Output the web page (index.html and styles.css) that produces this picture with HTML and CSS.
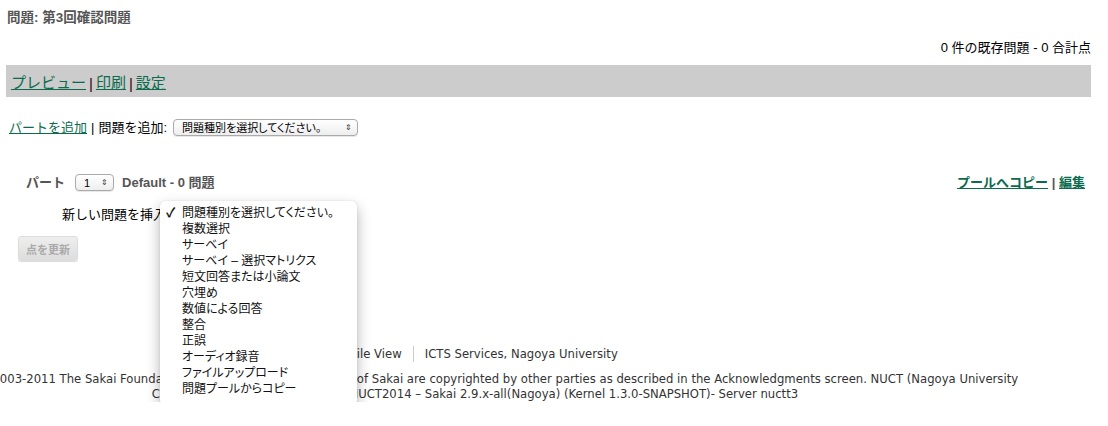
FILE: index.html
```html
<!DOCTYPE html>
<html lang="ja">
<head>
    <meta charset="UTF-8">
    <title>問題: 第3回確認問題</title>
    <link rel="stylesheet" href="styles.css">
</head>
<body>
    <div class="page">
        <h1 class="title">問題: 第3回確認問題</h1>
        <div class="totals">0 件の既存問題 - 0 合計点</div>

        <div class="navbar">
            <a href="#">プレビュー</a><span class="sep">|</span><a href="#">印刷</a><span class="sep">|</span><a href="#">設定</a>
        </div>

        <div class="addbar">
            <a href="#">パートを追加</a>
            <span class="bar">|</span>
            <span>問題を追加:</span>
            <span class="select wide">問題種別を選択してください。<span class="arrows">&#8661;</span></span>
        </div>

        <div class="part-head">
            <div class="part-left">
                <span>パート</span>
                <span class="select small">1<span class="arrows">&#8661;</span></span>
                <span>Default - 0 問題</span>
            </div>
            <div class="part-right">
                <a href="#">プールへコピー</a> <span class="bar">|</span> <a href="#">編集</a>
            </div>
        </div>

        <div class="insert">新しい問題を挿入</div>

        <button class="update" disabled>点を更新</button>

        <div class="menu">
            <div class="item checked"><span class="check">&#10003;</span>問題種別を選択してください。</div>
            <div class="item">複数選択</div>
            <div class="item">サーベイ</div>
            <div class="item">サーベイ – 選択マトリクス</div>
            <div class="item">短文回答または小論文</div>
            <div class="item">穴埋め</div>
            <div class="item">数値による回答</div>
            <div class="item">整合</div>
            <div class="item">正誤</div>
            <div class="item">オーディオ録音</div>
            <div class="item">ファイルアップロード</div>
            <div class="item">問題プールからコピー</div>
        </div>
    </div>

    <div class="footer">
        <div class="footer-links">
            <span>Mobile View</span><span class="divider"></span><span>ICTS Services, Nagoya University</span>
        </div>
        <div class="copyright">Copyright 2003-2011 The Sakai Foundation. All rights reserved. Portions of Sakai are copyrighted by other parties as described in the Acknowledgments screen. NUCT (Nagoya University Collaboration and Course Tools) – NUCT2014 – Sakai 2.9.x-all(Nagoya) (Kernel 1.3.0-SNAPSHOT)- Server nuctt3</div>
    </div>
</body>
</html>
```

FILE: styles.css
```css
body {
    margin: 0;
    font-family: "Liberation Sans", "Noto Sans CJK JP", sans-serif;
    color: #000;
    background: #fff;
}
a {
    color: #0b6b4d;
}
.page {
    position: relative;
    padding: 0 17px 0 6px;
}
.title {
    margin: 0;
    padding: 10px 0 0 1px;
    font-size: 13.5px;
    line-height: 16px;
    color: #555;
}
.totals {
    margin-top: 14px;
    text-align: right;
    font-size: 13px;
    line-height: 16px;
}
.navbar {
    margin-top: 9px;
    height: 32px;
    background-color: #ccc;
    display: flex;
    align-items: center;
    padding-left: 5px;
    font-size: 15px;
}
.navbar .sep {
    margin: 4px 3px 0;
    color: #300;
}
.addbar {
    margin-top: 22px;
    padding-left: 3px;
    display: flex;
    align-items: center;
    gap: 4px;
    font-size: 13px;
    line-height: 16px;
}
.addbar .select {
    margin-left: 2px;
}
.select {
    display: inline-flex;
    align-items: center;
    justify-content: space-between;
    height: 15px;
    border: 1px solid #aaa;
    border-radius: 4px;
    background: linear-gradient(#fff, #eee);
    font-size: 11px;
    font-weight: normal;
    font-feature-settings: "palt";
    color: #000;
    box-shadow: 0 1px 1px rgba(0, 0, 0, 0.1);
}
.select.wide {
    width: 170px;
    padding: 0 5px 0 8px;
}
.select.small {
    width: 24px;
    padding: 0 5px 0 8px;
}
.arrows {
    font-size: 8px;
    color: #333;
}
.part-head {
    margin-top: 38px;
    padding: 0 6px 0 20px;
    display: flex;
    justify-content: space-between;
    align-items: center;
    font-size: 13px;
    line-height: 16px;
    font-weight: bold;
}
.part-left {
    display: flex;
    align-items: center;
    gap: 8px;
    color: #555;
}
.part-left .select {
    margin-left: 2px;
}
.part-right .bar {
    color: #555;
}
.insert {
    margin-top: 16px;
    padding-left: 56px;
    font-size: 13px;
    line-height: 16px;
}
.update {
    margin: 13px 0 0 12px;
    width: 60px;
    height: 25px;
    padding: 0;
    border: 1px solid #ddd;
    border-radius: 3px;
    background: linear-gradient(#eee, #ddd);
    color: #aaa;
    font-family: inherit;
    font-size: 11px;
    font-weight: bold;
    box-shadow: 0 1px 1px rgba(0, 0, 0, 0.15);
}
.menu {
    position: absolute;
    left: 160px;
    top: 201px;
    width: 197px;
    padding: 4px 0 8px;
    background: #fff;
    border-radius: 5px;
    box-shadow: 0 0 1px rgba(0, 0, 0, 0.25), 0 6px 14px rgba(0, 0, 0, 0.3);
    z-index: 2;
}
.item {
    position: relative;
    height: 16px;
    line-height: 16px;
    padding-left: 22px;
    font-size: 12px;
    font-feature-settings: "palt";
    color: #111;
}
.check {
    position: absolute;
    left: 6px;
    font-size: 13px;
    font-weight: bold;
}
.footer {
    margin: 85px 0 0 -74px;
    width: 1098px;
    text-align: center;
    font-family: "DejaVu Sans", "Noto Sans CJK JP", sans-serif;
    font-size: 11.65px;
    color: #333;
}
.footer-links {
    display: flex;
    justify-content: center;
    align-items: center;
    line-height: 16px;
}
.divider {
    width: 1px;
    height: 16px;
    background: #ccc;
    margin: 0 11px;
}
.copyright {
    margin-top: 10px;
    line-height: 15px;
}
```
